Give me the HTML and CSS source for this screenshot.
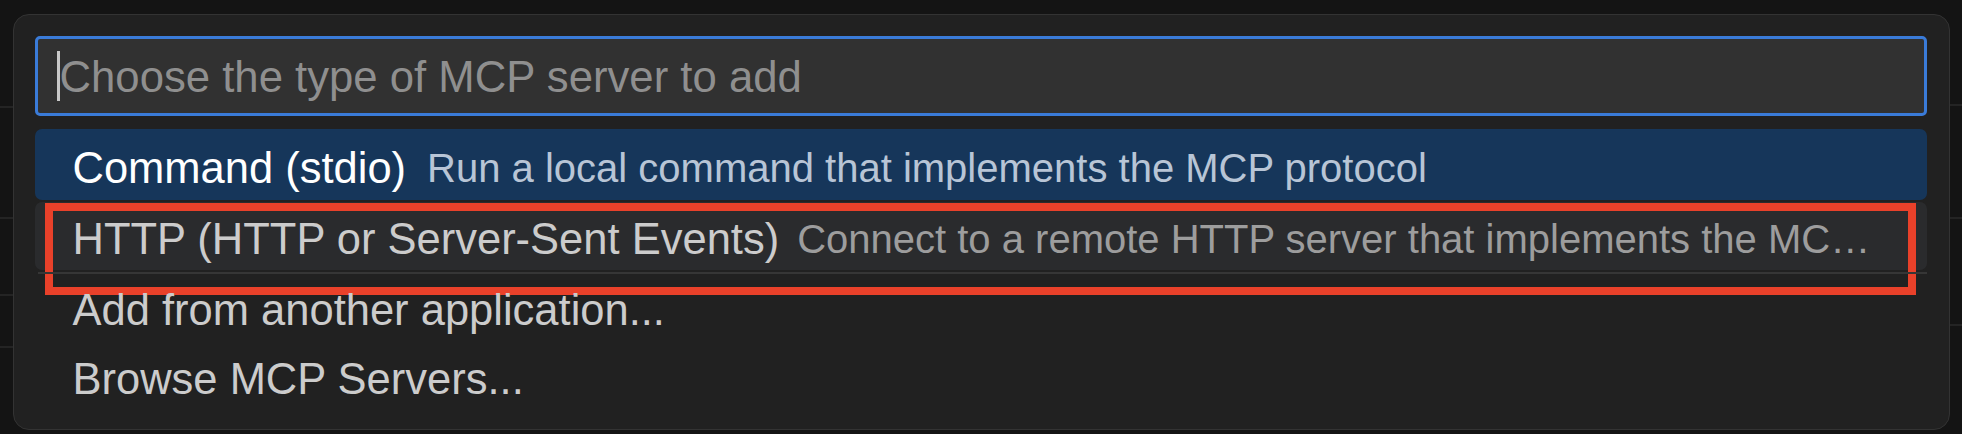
FILE: index.html
```html
<!DOCTYPE html>
<html lang="en">
<head>
<meta charset="UTF-8" />
<meta name="viewport" content="width=device-width, initial-scale=1" />
<title>Add MCP Server</title>
<link rel="stylesheet" href="styles.css">
</head>
<body>

<div class="backdrop">
  <div class="side side-left">
    <div class="line"></div>
    <div class="line"></div>
    <div class="line"></div>
    <div class="line"></div>
  </div>

  <div class="quick-pick">
    <div class="quick-input">
      <span class="caret"></span>
      <span class="placeholder">Choose the type of MCP server to add</span>
    </div>

    <div class="list">
      <div class="row selected">
        <span class="label">Command (stdio)</span>
        <span class="desc">Run a local command that implements the MCP protocol</span>
      </div>
      <div class="row hovered">
        <span class="label">HTTP (HTTP or Server-Sent Events)</span>
        <span class="desc">Connect to a remote HTTP server that implements the MC…</span>
        <div class="highlight"></div>
      </div>
      <div class="row">
        <span class="label">Add from another application...</span>
      </div>
      <div class="row">
        <span class="label">Browse MCP Servers...</span>
      </div>
    </div>
  </div>

  <div class="side side-right">
    <div class="line"></div>
    <div class="line"></div>
    <div class="line"></div>
  </div>
</div>

</body>
</html>
```

FILE: styles.css
```css
body {
  margin: 0;
  background: #141414;
  font-family: "Liberation Sans", Arial, sans-serif;
  overflow: hidden;
}
.backdrop {
  display: flex;
  height: 434px;
  padding-top: 14px;
  box-sizing: border-box;
}
.side {
  flex: 1;
  display: flex;
  flex-direction: column;
}
.side .line {
  border-top: 2px solid #242424;
}
.side-left .line:nth-child(1) { margin-top: 92px; }
.side-left .line:nth-child(2) { margin-top: 109px; }
.side-left .line:nth-child(3) { margin-top: 75px; }
.side-left .line:nth-child(4) { margin-top: 50px; }
.side-right .line:nth-child(1) { margin-top: 90px; }
.side-right .line:nth-child(2) { margin-top: 111px; }
.side-right .line:nth-child(3) { margin-top: 105px; }

.quick-pick {
  width: 1937px;
  height: 416px;
  box-sizing: border-box;
  flex: none;
  background: #212121;
  border: 1px solid #333333;
  border-radius: 16px;
  padding: 21px 22px 0 21px;
}
.quick-input {
  height: 80px;
  box-sizing: border-box;
  border: 3px solid #3a7bd8;
  border-radius: 5px;
  background: #313131;
  display: flex;
  align-items: center;
  padding-left: 19px;
}
.caret {
  width: 3px;
  height: 50px;
  background: #c8c8c8;
}
.placeholder {
  font-size: 43.7px;
  color: #8f8f8f;
  padding-top: 2px;
}
.list {
  margin-top: 13px;
  display: flex;
  flex-direction: column;
}
.row {
  position: relative;
  height: 71px;
  display: flex;
  align-items: center;
  gap: 21px;
  padding: 7px 40px 0 38px;
  box-sizing: border-box;
  border-radius: 7px;
  white-space: nowrap;
}
.row .label {
  font-size: 43.5px;
  color: #cccccc;
  flex: none;
}
.row .desc {
  font-size: 40px;
  color: #9d9d9d;
}
.row.selected {
  background: #16365a;
}
.row.selected .label {
  color: #ffffff;
}
.row.selected .desc {
  color: #b8c5d6;
}
.row.hovered {
  margin-top: 2px;
  height: 68px;
  background: #2a2b2d;
}
.row.hovered .desc {
  margin-left: -3px;
}
.row.hovered + .row {
  margin-top: 2px;
  height: 68px;
  border-top: 2px solid #363636;
  border-radius: 0;
  margin-left: 3px;
  padding-left: 35px;
}
.highlight {
  position: absolute;
  left: 10px;
  top: 1px;
  width: 1871px;
  height: 92px;
  box-sizing: border-box;
  border: 8px solid #e9412a;
}
```
